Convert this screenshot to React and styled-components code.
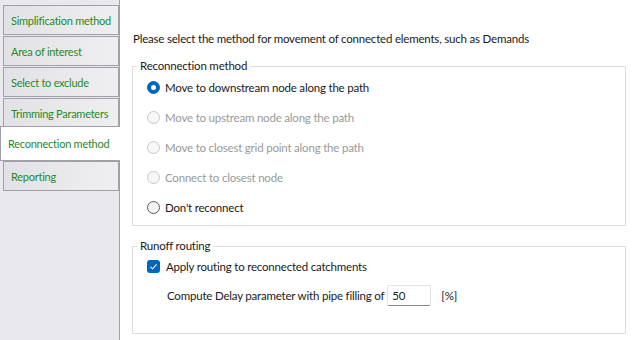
import React from 'react';
import styled, { createGlobalStyle } from 'styled-components';

const GlobalStyle = createGlobalStyle`
  html, body {
    margin: 0;
    padding: 0;
    background: #fff;
  }
  body {
    font-family: Lato, "Noto Sans", sans-serif;
    font-size: 11.5px;
    letter-spacing: -0.2px;
    color: #1a1a1a;
  }
`;

const Window = styled.div`
  display: flex;
  width: 635px;
  height: 340px;
  overflow: hidden;
  background: #fff;
`;

const Sidebar = styled.div`
  width: 120px;
  flex-shrink: 0;
  box-sizing: border-box;
  background: #e9e9ed;
  border-right: 1px solid #a0a0a8;
  padding-top: 5px;
  display: flex;
  flex-direction: column;
  gap: 1px;
`;

const Tab = styled.div`
  position: relative;
  box-sizing: border-box;
  height: ${p => (p.$active ? '35px' : '30px')};
  margin: ${p => (p.$active ? '-3px -1px -1px 0' : '0 0 0 3px')};
  padding-left: 7px;
  display: flex;
  align-items: center;
  border: 1px solid #a0a0a8;
  border-right: ${p => (p.$active ? 'none' : '1px solid #a0a0a8')};
  background: ${p => (p.$active ? '#fff' : 'linear-gradient(to right, #e2e2e6, #efeff1)')};
  color: #1f8a1f;
  font-size: 11px;
  letter-spacing: -0.25px;
  white-space: nowrap;
  z-index: ${p => (p.$active ? 1 : 0)};
`;

const Content = styled.div`
  flex: 1;
  padding: 32px 9px 0 12px;
  display: flex;
  flex-direction: column;
`;

const Intro = styled.div`
  line-height: 14px;
  padding-left: 1px;
`;

const Group = styled.div`
  position: relative;
  box-sizing: border-box;
  margin-top: 20px;
  height: ${p => p.$height}px;
  border: 1px solid #dcdcdc;
  padding: ${p => p.$pad};
`;

const Legend = styled.span`
  position: absolute;
  top: -8px;
  left: 4px;
  padding: 0 3px;
  background: #fff;
  line-height: 14px;
`;

const OptionRow = styled.div`
  height: ${p => p.$height || 30}px;
  display: flex;
  align-items: center;
  padding-left: 14px;
  gap: ${p => p.$gap || 5}px;
  color: ${p => (p.$disabled ? '#9a9a9a' : '#1a1a1a')};
`;

const Radio = styled.span`
  box-sizing: border-box;
  width: 13px;
  height: 13px;
  border-radius: 50%;
  flex-shrink: 0;
  display: flex;
  align-items: center;
  justify-content: center;
  border: 1px solid ${p => (p.$checked ? '#0067c0' : p.$disabled ? '#c8c8c8' : '#5c5c5c')};
  background: ${p => (p.$checked ? '#0067c0' : p.$disabled ? '#f7f7f7' : '#f2f2f2')};
  &::after {
    content: '';
    display: ${p => (p.$checked ? 'block' : 'none')};
    width: 5px;
    height: 5px;
    border-radius: 50%;
    background: #fff;
  }
`;

const Check = styled.span`
  width: 13px;
  height: 13px;
  border-radius: 3px;
  background: #0067c0;
  flex-shrink: 0;
  display: flex;
  align-items: center;
  justify-content: center;
`;

const FillRow = styled.div`
  height: 24px;
  display: flex;
  align-items: center;
  padding-left: 34px;
  margin-top: 7px;
`;

const NumberBox = styled.div`
  box-sizing: border-box;
  width: 44px;
  height: 21px;
  margin-left: 3px;
  padding: 0 4px;
  display: flex;
  align-items: center;
  border: 1px solid #e3e3e3;
  border-bottom-color: #8a8a8a;
  border-radius: 2px;
  background: #fff;
`;

const Unit = styled.span`
  margin-left: 10px;
`;

const tabs = [
  'Simplification method',
  'Area of interest',
  'Select to exclude',
  'Trimming Parameters',
  'Reconnection method',
  'Reporting',
];

const options = [
  { label: 'Move to downstream node along the path', checked: true },
  { label: 'Move to upstream node along the path', disabled: true },
  { label: 'Move to closest grid point along the path', disabled: true },
  { label: 'Connect to closest node', disabled: true },
  { label: "Don't reconnect" },
];

export default function App() {
  return (
    <>
      <GlobalStyle />
      <Window>
        <Sidebar>
          {tabs.map(t => (
            <Tab key={t} $active={t === 'Reconnection method'}>{t}</Tab>
          ))}
        </Sidebar>
        <Content>
          <Intro>Please select the method for movement of connected elements, such as Demands</Intro>
          <Group $height={160} $pad="5px 0 0 0">
            <Legend>Reconnection method</Legend>
            {options.map(o => (
              <OptionRow key={o.label} $disabled={o.disabled}>
                <Radio $checked={o.checked} $disabled={o.disabled} />
                {o.label}
              </OptionRow>
            ))}
          </Group>
          <Group $height={88} $pad="9px 0 0 0">
            <Legend>Runoff routing</Legend>
            <OptionRow $height={20} $gap={6}>
              <Check>
                <svg width="9" height="9" viewBox="0 0 9 9">
                  <polyline points="1.5,4.8 3.6,6.8 7.6,2.4" fill="none" stroke="#fff" strokeWidth="1.1" />
                </svg>
              </Check>
              Apply routing to reconnected catchments
            </OptionRow>
            <FillRow>
              Compute Delay parameter with pipe filling of
              <NumberBox>50</NumberBox>
              <Unit>[%]</Unit>
            </FillRow>
          </Group>
        </Content>
      </Window>
    </>
  );
}
